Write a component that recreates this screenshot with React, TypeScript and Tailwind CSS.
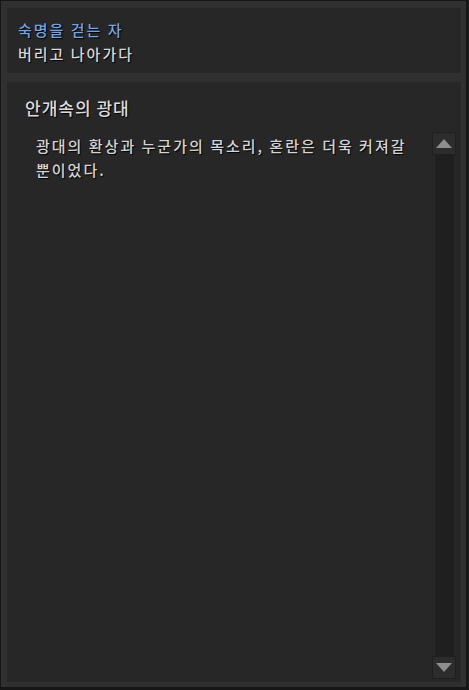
export default function App() {
  const font = { fontFamily: '"Noto Sans CJK KR", "Noto Sans", sans-serif' };

  return (
    <div
      className="w-[469px] h-[690px] bg-[#161616] pt-px pl-px pr-[3px] pb-[3px]"
      style={font}
    >
      <div className="h-full bg-[#303030] pt-[7px] pl-[6px] pr-[5px] pb-[5px] flex flex-col gap-[9px]">
        <div className="bg-[#272727] pl-[11px] pt-[10px] pb-[7px] text-[15px] leading-[24px] font-medium tracking-[2px] [text-shadow:1px_1px_1px_#000]">
          <p className="text-[#74a3e2]">숙명을 걷는 자</p>
          <p className="text-[#d6d6d6]">버리고 나아가다</p>
        </div>
        <div className="flex-1 bg-[#272727] flex flex-col pt-[13px] pb-[3px] pr-[5px]">
          <p className="pl-[18px] text-[17px] leading-[26px] font-medium tracking-[1px] text-[#dcdcdc] [text-shadow:1px_1px_1px_#000]">
            안개속의 광대
          </p>
          <div className="flex-1 flex mt-[11px]">
            <div className="flex-1 pl-[29px] pr-[6px] pt-[2px] text-[15px] leading-[24px] font-medium tracking-[2px] text-[#d4d4d4] [text-shadow:1px_1px_1px_#000]">
              광대의 환상과 누군가의 목소리, 혼란은 더욱 커져갈 뿐이었다.
            </div>
            <div className="w-[24px] flex flex-col">
              <div className="h-[23px] bg-[#2c2c2c] border border-[#1f1f1f] flex items-center justify-center">
                <svg width="16" height="9" viewBox="0 0 16 9">
                  <polygon points="8,0 16,9 0,9" fill="#8e8e8e" />
                </svg>
              </div>
              <div className="flex-1 flex justify-center">
                <div className="w-[19px] bg-[#1f1f1f]" />
              </div>
              <div className="h-[23px] bg-[#2c2c2c] border border-[#1f1f1f] flex items-center justify-center">
                <svg width="16" height="9" viewBox="0 0 16 9">
                  <polygon points="0,0 16,0 8,9" fill="#8e8e8e" />
                </svg>
              </div>
            </div>
          </div>
        </div>
      </div>
    </div>
  );
}
